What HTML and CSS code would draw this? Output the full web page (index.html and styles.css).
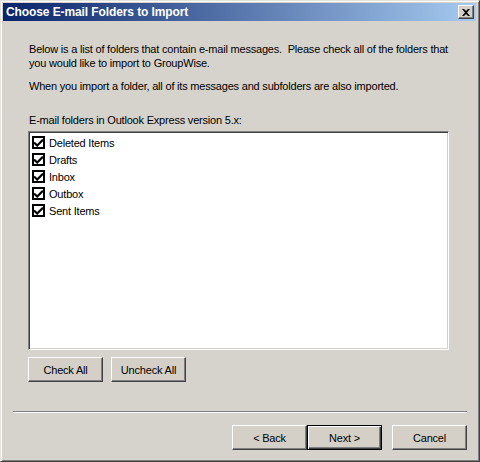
FILE: index.html
```html
<!DOCTYPE html>
<html>
<head>
<meta charset="utf-8">
<link rel="stylesheet" href="styles.css">
</head>
<body>
<div class="window">
  <div class="titlebar">
    <span class="title">Choose E-mail Folders to Import</span>
    <span class="close"><svg width="8" height="7" viewBox="0 0 8 7"><path d="M0 0h2l2 2 2-2h2L5 3.5 8 7H6L4 5 2 7H0l3-3.5z" fill="#000"/></svg></span>
  </div>
  <div class="content">
    <p class="para">Below is a list of folders that contain e-mail messages.&nbsp; Please check all of the folders that<br>you would like to import to GroupWise.</p>
    <p class="para second">When you import a folder, all of its messages and subfolders are also imported.</p>
    <div class="label">E-mail folders in Outlook Express version 5.x:</div>
    <div class="listbox">
      <div class="item"><span class="cb"><svg width="9" height="8" viewBox="0 0 9 8"><path d="M0 3.5 3.2 6.5 9 0.7" fill="none" stroke="#000" stroke-width="2.2"/></svg></span>Deleted Items</div>
      <div class="item"><span class="cb"><svg width="9" height="8" viewBox="0 0 9 8"><path d="M0 3.5 3.2 6.5 9 0.7" fill="none" stroke="#000" stroke-width="2.2"/></svg></span>Drafts</div>
      <div class="item"><span class="cb"><svg width="9" height="8" viewBox="0 0 9 8"><path d="M0 3.5 3.2 6.5 9 0.7" fill="none" stroke="#000" stroke-width="2.2"/></svg></span>Inbox</div>
      <div class="item"><span class="cb"><svg width="9" height="8" viewBox="0 0 9 8"><path d="M0 3.5 3.2 6.5 9 0.7" fill="none" stroke="#000" stroke-width="2.2"/></svg></span>Outbox</div>
      <div class="item"><span class="cb"><svg width="9" height="8" viewBox="0 0 9 8"><path d="M0 3.5 3.2 6.5 9 0.7" fill="none" stroke="#000" stroke-width="2.2"/></svg></span>Sent Items</div>
    </div>
    <div class="btnrow">
      <div class="btn">Check All</div>
      <div class="btn">Uncheck All</div>
    </div>
  </div>
  <div class="sep"></div>
  <div class="footer">
    <div class="btn">&lt; Back</div>
    <div class="btn default">Next &gt;</div>
    <div class="btn cancel">Cancel</div>
  </div>
</div>
</body>
</html>
```
FILE: styles.css
```css
* { box-sizing: border-box; }
html, body { margin: 0; padding: 0; }
body {
  width: 480px;
  height: 462px;
  background: #d4d0c8;
  font-family: "Liberation Sans", Arial, sans-serif;
  font-size: 11px;
  letter-spacing: -0.2px;
  color: #000;
}
.window {
  width: 480px;
  height: 462px;
  background: #d6d3cd;
  border-top: 1px solid #e4e2dc;
  border-left: 1px solid #e4e2dc;
  border-right: 1px solid #404040;
  border-bottom: 1px solid #404040;
  box-shadow: inset 1px 1px 0 #ffffff, inset -1px -1px 0 #808080;
  padding: 2px 3px 0 2px;
  display: flex;
  flex-direction: column;
}
.titlebar {
  height: 18px;
  background: linear-gradient(to right, #0a246a, #a6caf0);
  display: flex;
  align-items: center;
  justify-content: space-between;
  padding: 0 2px 0 3px;
}
.title {
  color: #fff;
  font-weight: bold;
  font-size: 12px;
  letter-spacing: -0.1px;
}
.close {
  width: 16px;
  height: 14px;
  background: #d4d0c8;
  border-top: 1px solid #fff;
  border-left: 1px solid #fff;
  border-right: 1px solid #404040;
  border-bottom: 1px solid #404040;
  box-shadow: inset -1px -1px 0 #808080;
  display: flex;
  align-items: center;
  justify-content: center;
}
.content {
  padding: 21px 0 0 26px;
}
.para {
  margin: 0;
  line-height: 14px;
  white-space: nowrap;
}
.second {
  margin-top: 9px;
}
.label {
  margin-top: 20px;
  line-height: 14px;
}
.listbox {
  margin-left: -1px;
  width: 421px;
  height: 219px;
  background: #fff;
  border-top: 1px solid #808080;
  border-left: 1px solid #808080;
  border-right: 1px solid #fff;
  border-bottom: 1px solid #fff;
  box-shadow: inset 1px 1px 0 #404040, inset -1px -1px 0 #d4d0c8;
  padding: 2px 0 0 3px;
  margin-top: 4px;
}
.item {
  height: 17px;
  display: flex;
  align-items: center;
}
.cb {
  width: 13px;
  height: 13px;
  border: 2px solid #000;
  background: #fff;
  display: flex;
  align-items: center;
  justify-content: center;
  margin-right: 4px;
}
.btnrow {
  display: flex;
  gap: 8px;
  margin-top: 7px;
  margin-left: -1px;
}
.btn {
  width: 75px;
  height: 25px;
  background: #d4d0c8;
  border-top: 1px solid #fff;
  border-left: 1px solid #fff;
  border-right: 1px solid #404040;
  border-bottom: 1px solid #404040;
  box-shadow: inset -1px -1px 0 #808080;
  display: flex;
  align-items: center;
  justify-content: center;
}
.btn.default {
  border: 1px solid #000;
  box-shadow: inset 1px 1px 0 #fff, inset -1px -1px 0 #404040, inset -2px -2px 0 #808080;
}
.sep {
  margin: 29px 9px 0 10px;
  height: 2px;
  border-top: 1px solid #808080;
  border-bottom: 1px solid #fff;
}
.footer {
  display: flex;
  justify-content: flex-end;
  padding: 12px 9px 0 0;
}
.footer .cancel {
  margin-left: 10px;
}
```
